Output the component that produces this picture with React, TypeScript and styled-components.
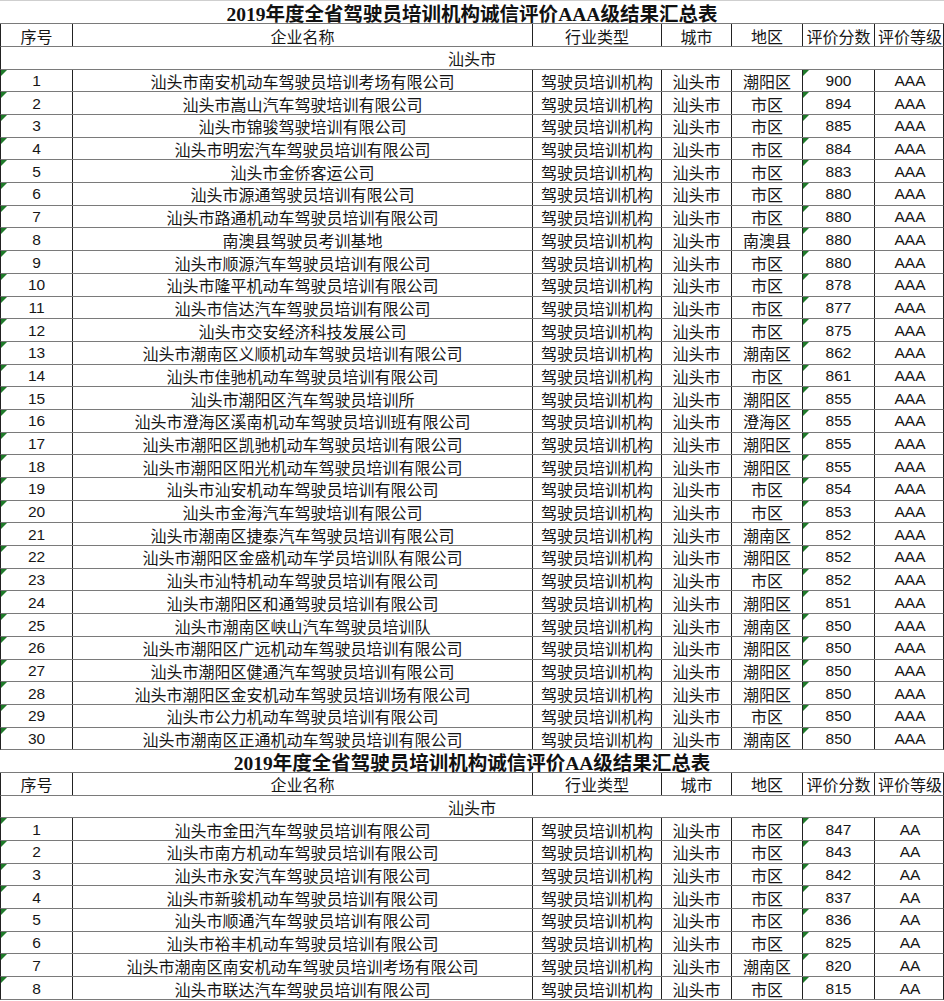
import styled, {createGlobalStyle} from "styled-components";

type Entry = {name: string; district: string; score: string};

const aaaList: Entry[] = [
    {name: "汕头市南安机动车驾驶员培训考场有限公司", district: "潮阳区", score: "900"},
    {name: "汕头市嵩山汽车驾驶培训有限公司", district: "市区", score: "894"},
    {name: "汕头市锦骏驾驶培训有限公司", district: "市区", score: "885"},
    {name: "汕头市明宏汽车驾驶员培训有限公司", district: "市区", score: "884"},
    {name: "汕头市金侨客运公司", district: "市区", score: "883"},
    {name: "汕头市源通驾驶员培训有限公司", district: "市区", score: "880"},
    {name: "汕头市路通机动车驾驶员培训有限公司", district: "市区", score: "880"},
    {name: "南澳县驾驶员考训基地", district: "南澳县", score: "880"},
    {name: "汕头市顺源汽车驾驶员培训有限公司", district: "市区", score: "880"},
    {name: "汕头市隆平机动车驾驶员培训有限公司", district: "市区", score: "878"},
    {name: "汕头市信达汽车驾驶员培训有限公司", district: "市区", score: "877"},
    {name: "汕头市交安经济科技发展公司", district: "市区", score: "875"},
    {name: "汕头市潮南区义顺机动车驾驶员培训有限公司", district: "潮南区", score: "862"},
    {name: "汕头市佳驰机动车驾驶员培训有限公司", district: "市区", score: "861"},
    {name: "汕头市潮阳区汽车驾驶员培训所", district: "潮阳区", score: "855"},
    {name: "汕头市澄海区溪南机动车驾驶员培训班有限公司", district: "澄海区", score: "855"},
    {name: "汕头市潮阳区凯驰机动车驾驶员培训有限公司", district: "潮阳区", score: "855"},
    {name: "汕头市潮阳区阳光机动车驾驶员培训有限公司", district: "潮阳区", score: "855"},
    {name: "汕头市汕安机动车驾驶员培训有限公司", district: "市区", score: "854"},
    {name: "汕头市金海汽车驾驶培训有限公司", district: "市区", score: "853"},
    {name: "汕头市潮南区捷泰汽车驾驶员培训有限公司", district: "潮南区", score: "852"},
    {name: "汕头市潮阳区金盛机动车学员培训队有限公司", district: "潮阳区", score: "852"},
    {name: "汕头市汕特机动车驾驶员培训有限公司", district: "市区", score: "852"},
    {name: "汕头市潮阳区和通驾驶员培训有限公司", district: "潮阳区", score: "851"},
    {name: "汕头市潮南区峡山汽车驾驶员培训队", district: "潮南区", score: "850"},
    {name: "汕头市潮阳区广远机动车驾驶员培训有限公司", district: "潮阳区", score: "850"},
    {name: "汕头市潮阳区健通汽车驾驶员培训有限公司", district: "潮阳区", score: "850"},
    {name: "汕头市潮阳区金安机动车驾驶员培训场有限公司", district: "潮阳区", score: "850"},
    {name: "汕头市公力机动车驾驶员培训有限公司", district: "市区", score: "850"},
    {name: "汕头市潮南区正通机动车驾驶员培训有限公司", district: "潮南区", score: "850"},
];

const aaList: Entry[] = [
    {name: "汕头市金田汽车驾驶员培训有限公司", district: "市区", score: "847"},
    {name: "汕头市南方机动车驾驶员培训有限公司", district: "市区", score: "843"},
    {name: "汕头市永安汽车驾驶员培训有限公司", district: "市区", score: "842"},
    {name: "汕头市新骏机动车驾驶员培训有限公司", district: "市区", score: "837"},
    {name: "汕头市顺通汽车驾驶员培训有限公司", district: "市区", score: "836"},
    {name: "汕头市裕丰机动车驾驶员培训有限公司", district: "市区", score: "825"},
    {name: "汕头市潮南区南安机动车驾驶员培训考场有限公司", district: "潮南区", score: "820"},
    {name: "汕头市联达汽车驾驶员培训有限公司", district: "市区", score: "815"},
];

const headers = ["序号", "企业名称", "行业类型", "城市", "地区", "评价分数", "评价等级"];

const ResultTable = ({level, list}: {level: string; list: Entry[]}) => (
    <>
        <TitleRow>2019年度全省驾驶员培训机构诚信评价{level}级结果汇总表</TitleRow>
        <Row>
            {headers.map((h) => (
                <Cell key={h}>{h}</Cell>
            ))}
        </Row>
        <CityRow>汕头市</CityRow>
        {list.map((entry, index) => (
            <Row key={entry.name}>
                <Cell $flag $num>{index + 1}</Cell>
                <Cell>{entry.name}</Cell>
                <Cell>驾驶员培训机构</Cell>
                <Cell>汕头市</Cell>
                <Cell>{entry.district}</Cell>
                <Cell $flag $num>{entry.score}</Cell>
                <Cell $num>{level}</Cell>
            </Row>
        ))}
    </>
);

export default function App() {
    return (
        <>
            <GlobalStyle/>
            <Sheet>
                <ResultTable level="AAA" list={aaaList}/>
                <ResultTable level="AA" list={aaList}/>
            </Sheet>
        </>
    );
}

const GlobalStyle = createGlobalStyle`
    html, body {
        margin: 0;
        padding: 0;
        background: #ffffff;
    }
    body {
        font-family: "Liberation Sans", "Noto Sans CJK SC", sans-serif;
        color: #161616;
    }
`

const Sheet = styled.div`
    width: 944px;
    display: flex;
    flex-direction: column;
`

const rowHeight = "22.7px";

const TitleRow = styled.div`
    height: ${rowHeight};
    box-sizing: border-box;
    display: flex;
    align-items: center;
    justify-content: center;
    padding-top: 1px;
    border-bottom: 1px solid #7a7a7a;
    font-family: "Liberation Serif", "Noto Sans CJK SC", serif;
    font-weight: 700;
    font-size: 19.5px;
    color: #111;

    &:first-child {
        height: 24.3px;
        border-top: 1px solid #cfcfcf;
    }
`

const Row = styled.div`
    height: ${rowHeight};
    box-sizing: border-box;
    display: grid;
    grid-template-columns: 72px 460px 129px 70px 71px 72px 70px;
    border-bottom: 1px solid #7a7a7a;
    border-left: 1px solid #222;
    border-right: 1px solid #222;
`

const CityRow = styled(Row)`
    display: flex;
    align-items: center;
    justify-content: center;
    padding-top: 1px;
    font-size: 16px;
`

const Cell = styled.div<{$flag?: boolean; $num?: boolean}>`
    position: relative;
    display: flex;
    align-items: center;
    justify-content: center;
    padding-top: 1px;
    border-right: 1px solid #222;
    font-size: ${({$num}) => ($num ? "15.5px" : "16px")};
    white-space: nowrap;
    overflow: hidden;

    &:last-child {
        border-right: none;
    }

    &::before {
        content: "";
        display: ${({$flag}) => ($flag ? "block" : "none")};
        position: absolute;
        left: 0;
        top: 0;
        width: 0;
        height: 0;
        border-top: 6px solid #1f7a2a;
        border-right: 6px solid transparent;
    }
`
